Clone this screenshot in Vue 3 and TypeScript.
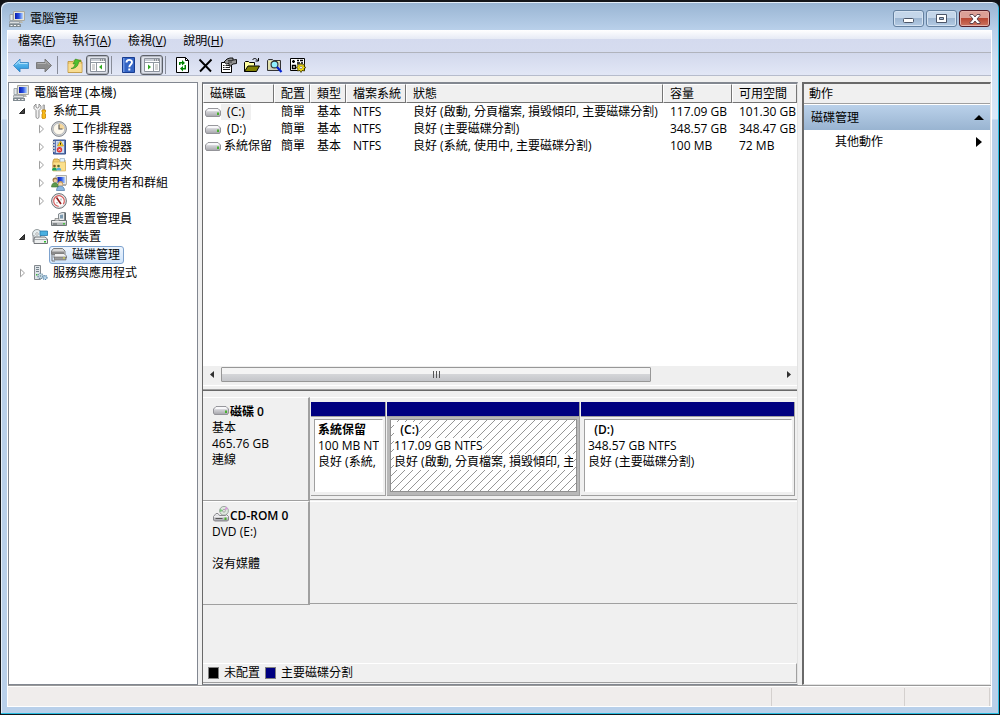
<script setup lang="ts">
interface TreeItem {
  label: string
  icon: string
  level: number
  state?: 'open' | 'closed'
  selected?: boolean
}

interface ToolItem {
  label: string
  icon: string
  pressed?: boolean
}

const menus = [
  { text: '檔案', key: 'F' },
  { text: '執行', key: 'A' },
  { text: '檢視', key: 'V' },
  { text: '說明', key: 'H' },
]

const toolGroups: ToolItem[][] = [
  [
    { label: '上一頁', icon: 'back' },
    { label: '下一頁', icon: 'forward' },
  ],
  [
    { label: '上一層', icon: 'up' },
    { label: '顯示/隱藏主控台樹狀目錄', icon: 'pane-left', pressed: true },
  ],
  [
    { label: '說明', icon: 'help' },
    { label: '顯示/隱藏執行窗格', icon: 'pane-right', pressed: true },
  ],
  [
    { label: '重新整理', icon: 'refresh' },
    { label: '刪除', icon: 'delete' },
    { label: '內容', icon: 'props' },
    { label: '開啟', icon: 'open' },
    { label: '尋找', icon: 'find' },
    { label: '設定', icon: 'settings' },
  ],
]

const tree: TreeItem[] = [
  { label: '電腦管理 (本機)', icon: 'computer', level: 0 },
  { label: '系統工具', icon: 'tools', level: 1, state: 'open' },
  { label: '工作排程器', icon: 'clock', level: 2, state: 'closed' },
  { label: '事件檢視器', icon: 'events', level: 2, state: 'closed' },
  { label: '共用資料夾', icon: 'shared', level: 2, state: 'closed' },
  { label: '本機使用者和群組', icon: 'users', level: 2, state: 'closed' },
  { label: '效能', icon: 'gauge', level: 2, state: 'closed' },
  { label: '裝置管理員', icon: 'device', level: 2 },
  { label: '存放裝置', icon: 'storage', level: 1, state: 'open' },
  { label: '磁碟管理', icon: 'disks', level: 2, selected: true },
  { label: '服務與應用程式', icon: 'services', level: 1, state: 'closed' },
]

const columns = ['磁碟區', '配置', '類型', '檔案系統', '狀態', '容量', '可用空間']

const rows = [
  [' (C:)', '簡單', '基本', 'NTFS', '良好 (啟動, 分頁檔案, 損毀傾印, 主要磁碟分割)', '117.09 GB', '101.30 GB'],
  [' (D:)', '簡單', '基本', 'NTFS', '良好 (主要磁碟分割)', '348.57 GB', '348.47 GB'],
  ['系統保留', '簡單', '基本', 'NTFS', '良好 (系統, 使用中, 主要磁碟分割)', '100 MB', '72 MB'],
]

const volumes = [
  { name: '系統保留', size: '100 MB NTFS', status: '良好 (系統, 使用中, 主要磁碟分割)', share: 75, active: false },
  { name: '  (C:)', size: '117.09 GB NTFS', status: '良好 (啟動, 分頁檔案, 損毀傾印, 主要磁碟分割)', share: 193, active: true },
  { name: '  (D:)', size: '348.57 GB NTFS', status: '良好 (主要磁碟分割)', share: 214, active: false },
]

const volumeColumns = volumes.map((v) => `minmax(0, ${v.share}fr)`).join(' ')
</script>

<template>
  <div class="window">
    <svg class="defs" aria-hidden="true">
      <defs>
        <linearGradient id="g-disk" x1="0" y1="0" x2="0" y2="1">
          <stop offset="0" stop-color="#f4f4f6" /><stop offset="1" stop-color="#a4a4aa" />
        </linearGradient>
        <linearGradient id="g-blue" x1="0" y1="0" x2="0" y2="1">
          <stop offset="0" stop-color="#7fd0f8" /><stop offset="1" stop-color="#1b8bd8" />
        </linearGradient>
        <linearGradient id="g-screen" x1="0" y1="0" x2="1" y2="0">
          <stop offset="0" stop-color="#0a1cb0" /><stop offset=".5" stop-color="#2850e0" /><stop offset="1" stop-color="#b8d8ff" />
        </linearGradient>
      </defs>

      <symbol id="computer" viewBox="0 0 16 16">
        <path d="M4.500.5h11v9h-11z" fill="#e4e4dc" stroke="#a8a8a0" />
        <path d="M6 2h8v6H6z" fill="url(#g-screen)" />
        <path d="M8 10h5l1 2H7z" fill="#b8b8b0" />
        <path d="M1 3.500h3v6H1z" fill="#e4eaec" stroke="#90989c" stroke-width=".8" />
        <path d="M.5 10.500h10v2H.5z" fill="#d8dcde" stroke="#8c9498" stroke-width=".7" />
        <path d="M0 13h12v3H0z" fill="#808a90" />
        <path d="M1.500 14h2v1h-2zm3.500 0h2v1H5zm3.500 0h2v1h-2z" fill="#f4f4f4" />
      </symbol>

      <symbol id="tools" viewBox="0 0 16 16">
        <path d="M4 1v3l1.500 1L7 4V1l2 2v2.500L7 7.500v7l-1.500 1-1.500-1v-7L2 5.500V3z" fill="#f0f0f0" stroke="#777" stroke-width=".8" />
        <path d="M11 2h1.500v5H11z" fill="#ddd" stroke="#888" stroke-width=".7" />
        <path d="M10 7h3.500v2l-1 1 1 1v4l-1 .8h-1.500l-1-.8v-4l1-1-1-1z" fill="#f8bc18" stroke="#c88400" stroke-width=".8" />
      </symbol>

      <symbol id="clock" viewBox="0 0 16 16">
        <circle cx="8" cy="8" r="7.400" fill="#d4d8dc" stroke="#787c80" stroke-width=".9" />
        <circle cx="8" cy="8" r="5.700" fill="#fdf8ec" stroke="#a4a4a4" stroke-width=".6" />
        <path d="M8 2.500a5.500 5.500 0 0 1 5.500 5.500H8z" fill="#f6d89c" />
        <path d="M8 3.500V8h3.500" fill="none" stroke="#555" stroke-width="1.100" />
      </symbol>

      <symbol id="events" viewBox="0 0 16 16">
        <path d="M2.500 1h12v14h-12z" fill="#5e78b4" stroke="#34508c" />
        <path d="M5 2h8v12H5z" fill="#cfdcf2" />
        <path d="M1 3h3M1 6h3M1 9h3M1 12h3" stroke="#ddd" stroke-width="1.500" />
        <path d="M6 4h2M6 6h2" stroke="#8c9cc0" />
        <path d="M9.500 2l3 5h-6z" fill="#ffd52e" stroke="#c29200" stroke-width=".6" />
        <path d="M9.500 3.700v2" stroke="#222" />
        <circle cx="8.500" cy="10.800" r="2.700" fill="#e03434" />
        <path d="M7.500 9.800l2 2m0-2l-2 2" stroke="#fff" stroke-width=".8" />
      </symbol>

      <symbol id="shared" viewBox="0 0 16 16">
        <path d="M2 4l1-2h4l1 1h6v10H2z" fill="#f0cb6a" stroke="#b98f2e" stroke-width=".8" />
        <path d="M9 1.500h4.500v5H9z" fill="#dff0ff" stroke="#88a4bc" stroke-width=".6" />
        <path d="M2 5h12.500v9H2z" fill="#fbe08c" stroke="#d0a848" stroke-width=".6" />
        <circle cx="3.500" cy="9" r="1.300" fill="#8a5520" /><circle cx="7.500" cy="9" r="1.300" fill="#52702c" />
        <path d="M1 13.500c0-4 5-4 5 0z" fill="#18a058" />
        <path d="M5.300 13.500c0-4 5-4 5 0z" fill="#54a8dc" />
      </symbol>

      <symbol id="users" viewBox="0 0 16 16">
        <path d="M5 .5h10.500v9H5z" fill="#e8e8e4" stroke="#b0b0a8" />
        <path d="M6.500 2H14v6H6.500z" fill="url(#g-screen)" />
        <path d="M11 9.500h4V11h-4z" fill="#aaa" />
        <circle cx="4" cy="5" r="2.500" fill="#9c7848" /><circle cx="4.400" cy="5.700" r="1.700" fill="#f0c8a0" />
        <path d="M.5 12c0-6 7-5.500 7 0z" fill="#5d9a4c" stroke="#3a7034" stroke-width=".6" />
        <circle cx="9.500" cy="8.500" r="2.500" fill="#c8a060" /><circle cx="9.500" cy="9.200" r="1.700" fill="#f8d8b0" />
        <path d="M5.500 15.500c0-6 8-6 8 0z" fill="#8cb8e0" stroke="#386898" stroke-width=".6" />
      </symbol>

      <symbol id="gauge" viewBox="0 0 16 16">
        <circle cx="8" cy="8" r="7.400" fill="#e8e8e8" stroke="#60646a" stroke-width=".9" />
        <circle cx="8" cy="8" r="5.300" fill="#fff" stroke="#d86060" stroke-width="1.200" stroke-dasharray="25 5" transform="rotate(120 8 8)" />
        <path d="M5.500 4.500L10 11" stroke="#902020" stroke-width="1.700" />
        <path d="M10 5.500v2M6 9v1.500" stroke="#999" />
      </symbol>

      <symbol id="device" viewBox="0 0 16 16">
        <path d="M7.500 8V3l3.500-1.500h2.500V9" fill="#e4e8ea" stroke="#838b90" />
        <path d="M9 4l3-.5v4H9z" fill="#7c9ab0" />
        <path d="M13.500 1l1 1v7" fill="none" stroke="#5b6468" />
        <path d="M.5 9.500h15v5H.5z" fill="#b4b8ba" stroke="#707678" />
        <path d="M1 10h14v1.500H1z" fill="#eee" />
        <path d="M2 13h4" stroke="#53585a" /><path d="M12 12h2v1.500h-2z" fill="#48c040" />
        <path d="M4 9.500V7.500h4v2" fill="#ddd" stroke="#777" stroke-width=".7" />
      </symbol>

      <symbol id="storage" viewBox="0 0 16 16">
        <circle cx="5" cy="5" r="4.500" fill="#e6eef0" stroke="#7c8488" stroke-width=".8" />
        <circle cx="5" cy="5" r="1.300" fill="#fff" stroke="#888" stroke-width=".6" />
        <path d="M8 2h7.500v4.500H8z" fill="#4ab0e0" stroke="#2678ac" stroke-width=".8" />
        <path d="M.5 6h2v7h-2z" fill="#a8acb0" />
        <path d="M3 8h10l2.500 2v4.500H2V10z" fill="#eceeee" stroke="#64686c" stroke-width=".9" />
        <path d="M2 10.500h13.500" stroke="#90969a" stroke-width=".8" /><path d="M12 12h2v1.500h-2z" fill="#30b830" />
      </symbol>

      <symbol id="disks" viewBox="0 0 16 16">
        <path d="M2.500 1.500h9L14 4v3.500H.5V4z" fill="#d8d8d8" stroke="#707070" stroke-width=".9" />
        <path d="M1 4.500h12v3H1z" fill="#8c8c8c" />
        <path d="M4 6.500h9L15.500 9v2H3V8.500z" fill="#f0f0f0" stroke="#707070" stroke-width=".8" />
        <path d="M3.500 10H15v3H3.500z" fill="#9c9c9c" stroke="#666" stroke-width=".6" />
        <path d="M1 8v6h3" fill="none" stroke="#777" /><path d="M12 10.500h2v1h-2z" fill="#e8e840" />
      </symbol>

      <symbol id="services" viewBox="0 0 16 16">
        <path d="M2.500.5h6v14h-6z" fill="#dfe4e8" stroke="#84898e" />
        <path d="M4 2.500h3M4 4.500h3M4 6.500h3" stroke="#76848e" />
        <path d="M4 9h1.500v1.500H4z" fill="#40b840" />
        <circle cx="8.500" cy="11" r="2.500" fill="#d8e8f0" stroke="#6c8ca0" stroke-width="1.300" stroke-dasharray="1.300 .8" />
        <circle cx="13" cy="12.500" r="2" fill="#bcd8ec" stroke="#5484a8" stroke-width="1.200" stroke-dasharray="1.100 .7" />
        <circle cx="8.500" cy="11" r="1" fill="#88a0b0" />
      </symbol>

      <symbol id="drive" viewBox="0 0 16 16">
        <path d="M3 4.500h10l2.500 2.500v4l-1 1.500h-13L.5 11V7z" fill="url(#g-disk)" stroke="#8c8c92" stroke-width=".9" />
        <path d="M3.500 5h9l2 2.500h-13z" fill="#f8f8fa" />
        <path d="M1.500 8h13" stroke="#c8c8ce" />
        <path d="M12 8.500h2V11h-2z" fill="#48b030" />
      </symbol>

      <symbol id="cdrom" viewBox="0 0 16 16">
        <circle cx="11" cy="4.800" r="4.400" fill="#dde8dd" stroke="#8c9490" stroke-width=".8" />
        <path d="M11 4.800L13 .8l2 2z" fill="#d898dc" /><path d="M11 4.800L7 3l-.3 3z" fill="#78c878" />
        <circle cx="11" cy="4.800" r="1.300" fill="#fff" stroke="#777" stroke-width=".6" />
        <path d="M3 7.500h2l1.500 2h6l1-1 2 2v3.500l-1 1h-13l-1-1v-3.500z" fill="url(#g-disk)" stroke="#808084" stroke-width=".9" />
        <path d="M1 10.700h14" stroke="#f4f4f4" /><path d="M2.500 12.500h7" stroke="#555" />
        <path d="M11.500 11.500h2V14h-2z" fill="#48b030" />
      </symbol>

      <symbol id="back" viewBox="0 0 16 16">
        <path d="M.5 8.500L7 2v3.500h8.500v6H7V15z" fill="url(#g-blue)" stroke="#3c88c4" stroke-width=".9" />
        <path d="M2.500 8L6.200 4.200v2.300h8.300" fill="none" stroke="#bfe8ff" stroke-width=".8" />
      </symbol>
      <symbol id="forward" viewBox="0 0 16 16">
        <path d="M15.500 8.500L9 2v3.500H.5v6H9V15z" fill="#8c8c8c" stroke="#747474" stroke-width=".9" />
        <path d="M1.500 6.500h8.300V4.200L13.500 8" fill="none" stroke="#bbb" stroke-width=".8" />
      </symbol>
      <symbol id="up" viewBox="0 0 16 16">
        <path d="M1 4.500h5l1.500-1.500H14v2h1v10.500H1z" fill="#f2cf76" stroke="#b98e34" stroke-width=".8" />
        <path d="M1.500 7h13v8h-13z" fill="#f8dc90" />
        <path d="M4 11.500c3-.5 4-3 4-5L6 7l2.500-5L14 4l-2.500 1c0 4-3.500 7-7.500 6.500z" fill="#50c030" stroke="#2c8818" stroke-width=".6" />
      </symbol>
      <symbol id="pane-left" viewBox="0 0 16 16">
        <path d="M.5 1.500h15v13H.5z" fill="#fff" stroke="#8c929c" />
        <path d="M1 2h14v2H1z" fill="#c8ccd4" /><path d="M10 3h1m1 0h1m1 0h1" stroke="#555" />
        <path d="M1 5.500h14M6.500 6v8.500" stroke="#9098a0" /><path d="M2 8h3m-3 2h3m-3 2h3" stroke="#a8a8a8" />
        <path d="M12 7.500v5L9 10z" fill="#30a820" />
      </symbol>
      <symbol id="pane-right" viewBox="0 0 16 16">
        <path d="M.5 1.500h15v13H.5z" fill="#fff" stroke="#8c929c" />
        <path d="M1 2h14v2H1z" fill="#c8ccd4" /><path d="M10 3h1m1 0h1m1 0h1" stroke="#555" />
        <path d="M1 5.500h14M9.500 6v8.500" stroke="#9098a0" /><path d="M11 8h3m-3 2h3m-3 2h3" stroke="#a8a8a8" />
        <path d="M4 7.500v5L7 10z" fill="#30a820" />
      </symbol>
      <symbol id="help" viewBox="0 0 16 16">
        <path d="M1.500.5h12v15h-12z" fill="#3464c4" stroke="#183c90" />
        <path d="M2 1h1.500v14H2z" fill="#6d96e4" />
        <path d="M5.500 5.500c0-3.500 5.500-3.300 5.500-.3 0 2.300-2.700 2.300-2.700 5" fill="none" stroke="#fff" stroke-width="1.900" />
        <path d="M7.300 11.500h2v2h-2z" fill="#fff" />
      </symbol>
      <symbol id="refresh" viewBox="0 0 16 16">
        <path d="M1.500.5h9l3 3v12h-12z" fill="#fff" stroke="#000" /><path d="M10.500.5v3h3" fill="none" stroke="#000" />
        <path d="M4 8V5h3V3l3 3-3 2.500V6.500H5.500V8z" fill="#008200" />
        <path d="M11 8v4.500H8v2l-3-3L8 9v2h1.500V8z" fill="#008200" />
      </symbol>
      <symbol id="delete" viewBox="0 0 16 16">
        <path d="M1.500 2.500L13 14.500M13.500 2.500L2 14.500" fill="none" stroke="#000" stroke-width="1.900" />
      </symbol>
      <symbol id="props" viewBox="0 0 16 16">
        <path d="M.5 5.500h10v10H.5z" fill="#fff" stroke="#000" />
        <path d="M2 8.500h1.500m1 0H9M2 10.500h1.500m1 0H9M2 12.500h7" stroke="#222" />
        <path d="M3 5l3-3 3-1h3v2l3.500-.5v4L12 7l-2.500 2H8V6.500L5.500 7z" fill="#909090" stroke="#000" stroke-width=".9" />
        <path d="M7 3.500h5M7 5h4" stroke="#222" stroke-width=".8" />
      </symbol>
      <symbol id="open" viewBox="0 0 16 16">
        <path d="M.5 14.500v-9l1-1h3l1 1h5v3" fill="#ffffa0" stroke="#000" />
        <path d="M.5 14.500L4 9h11.500l-3 5.500z" fill="#808000" stroke="#000" />
        <path d="M8.500 3c1-2 4-2 5 .5M14.500 1v3h-3" fill="none" stroke="#000" />
      </symbol>
      <symbol id="find" viewBox="0 0 16 16">
        <path d="M.5 13.500v-10l1-1h4l1 1h7v10z" fill="#d0d0c0" stroke="#333" />
        <path d="M2 4v8M2 4.500h10" stroke="#f4f4a0" />
        <circle cx="7.500" cy="7.500" r="3.400" fill="#90f0ff" stroke="#333" stroke-width="1.100" />
        <path d="M10 10l4.500 5" stroke="#0020d0" stroke-width="2.200" />
      </symbol>
      <symbol id="settings" viewBox="0 0 16 16">
        <path d="M.5 1.500h14v12H.5z" fill="#fff" stroke="#000" />
        <path d="M3.500 3v3m-1.500-1.500h3M2.500 8.500h3v3h-3zM7 3.500h2m1 0h3M7 6h3m1 0h2" fill="none" stroke="#000" stroke-width="1.400" />
        <path d="M11 6l1 2 2.500-1L14 9.500l2 1-2 1 .5 2.500-2.500-.5-1 2-1-2-2.500.5.5-2.500-2-1 2-1L7.500 7l2.500 1z" fill="#f8e010" stroke="#333000" stroke-width=".7" />
        <circle cx="11" cy="10.500" r="1.300" fill="#fff" stroke="#444" stroke-width=".5" />
      </symbol>
    </svg>

    <header class="titlebar">
      <svg class="icon"><use href="#computer" /></svg>
      <h1>電腦管理</h1>
      <div class="caption">
        <button type="button" aria-label="最小化" class="min">
          <svg width="12" height="6"><rect x=".5" y=".5" width="10" height="4" rx="1" fill="#fff" stroke="#4b5568" /></svg>
        </button>
        <button type="button" aria-label="最大化" class="max">
          <svg width="12" height="10"><path d="M.5.500h10v8H.5z" fill="#fff" stroke="#4b5568" /><path d="M3.500 3.500h4v2h-4z" fill="#a0b8d4" stroke="#4b5568" /></svg>
        </button>
        <button type="button" aria-label="關閉" class="close">
          <svg width="12" height="10"><path d="M1 .500h3L6 3 8 .500h3v1L8 5l3 3.500v1H8L6 7 4 9.500H1v-1L4 5 1 1.500z" fill="#fff" stroke="#533b45" stroke-width=".9" /></svg>
        </button>
      </div>
    </header>

    <div class="client">
      <nav class="menubar">
        <button v-for="m in menus" :key="m.key" type="button">{{ m.text }}(<u>{{ m.key }}</u>)</button>
      </nav>

      <div class="toolbar">
        <div v-for="(group, i) in toolGroups" :key="i" class="tool-group">
          <button
            v-for="t in group"
            :key="t.icon"
            type="button"
            :aria-label="t.label"
            :class="{ pressed: t.pressed }"
          >
            <svg class="icon"><use :href="'#' + t.icon" /></svg>
          </button>
        </div>
      </div>

      <main class="panes">
        <aside class="pane tree">
          <ul>
            <li v-for="item in tree" :key="item.label" :class="'level' + item.level">
              <span v-if="item.level" class="expander">
                <svg v-if="item.state === 'open'" width="8" height="8"><path d="M6.500 1.500v5h-5z" fill="#404040" stroke="#262626" /></svg>
                <svg v-else-if="item.state === 'closed'" width="8" height="10"><path d="M2.500 1.200L6.500 5l-4 3.800z" fill="#fff" stroke="#a0a0a0" /></svg>
              </span>
              <span class="node" :class="{ selected: item.selected }">
                <svg class="icon"><use :href="'#' + item.icon" /></svg>
                <span>{{ item.label }}</span>
              </span>
            </li>
          </ul>
        </aside>

        <section class="pane center">
          <div class="list">
            <div class="table-area">
              <table>
                <colgroup>
                  <col class="c-name" /><col class="c-short" /><col class="c-short" /><col class="c-fs" />
                  <col class="c-status" /><col class="c-size" /><col class="c-free" />
                </colgroup>
                <thead>
                  <tr><th v-for="c in columns" :key="c" scope="col">{{ c }}</th></tr>
                </thead>
                <tbody>
                  <tr v-for="(r, i) in rows" :key="r[0]">
                    <td v-for="(cell, j) in r" :key="j">
                      <span v-if="j === 0" class="vol-name">
                        <svg class="icon"><use href="#drive" /></svg>
                        <span :class="{ focused: i === 0 }">{{ cell }}</span>
                      </span>
                      <template v-else>{{ cell }}</template>
                    </td>
                  </tr>
                </tbody>
              </table>
            </div>
            <div class="scrollbar">
              <button type="button" aria-label="向左捲動"><svg width="4" height="7"><path d="M4 0v7L0 3.500z" fill="#303030" /></svg></button>
              <div class="track">
                <div class="thumb"><i></i><i></i><i></i></div>
              </div>
              <button type="button" aria-label="向右捲動"><svg width="4" height="7"><path d="M0 0v7l4-3.500z" fill="#303030" /></svg></button>
            </div>
          </div>

          <div class="splitter"></div>

          <div class="disks">
            <div class="disk">
              <div class="disk-label">
                <h2><svg class="icon"><use href="#drive" /></svg>磁碟 0</h2>
                <p>基本</p>
                <p>465.76 GB</p>
                <p>連線</p>
              </div>
              <div class="disk-body">
                <div class="volumes" :style="{ gridTemplateColumns: volumeColumns }">
                  <article v-for="v in volumes" :key="v.name" class="volume" :class="{ active: v.active }">
                    <div class="bar"></div>
                    <div class="volume-frame">
                      <div class="volume-box">
                        <svg v-if="v.active" class="hatch" aria-hidden="true">
                          <defs>
                            <pattern id="hatch" width="8" height="8" patternUnits="userSpaceOnUse">
                              <path d="M-1 9L9-1M-1 1l2-2M7 9l2-2" stroke="#8a8a8a" stroke-width=".9" />
                            </pattern>
                          </defs>
                          <rect width="100%" height="100%" fill="url(#hatch)" />
                        </svg>
                        <p><b>{{ v.name }}</b></p>
                        <p><span>{{ v.size }}</span></p>
                        <p><span>{{ v.status }}</span></p>
                      </div>
                    </div>
                  </article>
                </div>
              </div>
            </div>
            <div class="disk">
              <div class="disk-label">
                <h2><svg class="icon"><use href="#cdrom" /></svg>CD-ROM 0</h2>
                <p>DVD (E:)</p>
                <p></p>
                <p>沒有媒體</p>
              </div>
              <div class="disk-body"></div>
            </div>
          </div>

          <footer class="legend">
            <span><i class="swatch free"></i>未配置</span>
            <span><i class="swatch primary"></i>主要磁碟分割</span>
          </footer>
        </section>

        <aside class="pane actions">
          <h2 class="actions-title">動作</h2>
          <button type="button" class="actions-group">
            磁碟管理
            <svg width="10" height="5"><path d="M5 0l5 5H0z" /></svg>
          </button>
          <button type="button" class="actions-item">
            其他動作
            <svg width="6" height="10"><path d="M0 0l6 5-6 5z" /></svg>
          </button>
        </aside>
      </main>

      <footer class="statusbar"><span></span><span></span><span></span></footer>
    </div>
  </div>
</template>

<style>
html,
body {
  background: #101216;
}
</style>

<style scoped>
* {
  box-sizing: border-box;
}
.window {
  display: flex;
  flex-direction: column;
  height: 100vh;
  border: solid #14161a;
  border-width: 2px 1px 1px;
  border-top-left-radius: 8px;
  border-top-right-radius: 8px;
  background: linear-gradient(#98b4d2, #b9d0ea 28px, #cfe0f3 60px, #dae9f8 117px, #b9d0ea 118px);
  box-shadow: inset -1px -1px #28bce0, inset 1px 1px #e4eef8;
  padding: 0 7px 7px 6px;
  font: 12px/16px "Open Sans", "Noto Sans CJK TC", sans-serif;
  color: #000;
  overflow: hidden;
}
.defs {
  position: absolute;
  width: 0;
  height: 0;
}
.icon {
  width: 16px;
  height: 16px;
  flex: none;
  display: block;
}
button {
  font: inherit;
  color: inherit;
  border: 0;
  background: none;
  padding: 0;
}
h1,
h2,
p,
ul {
  margin: 0;
  padding: 0;
  font-size: inherit;
  font-weight: normal;
}
.titlebar {
  display: flex;
  align-items: center;
  gap: 5px;
  height: 28px;
  flex: none;
  padding: 5px 2px 0 2px;
}
.caption {
  display: flex;
  gap: 2px;
  margin-left: auto;
}
.caption button {
  display: flex;
  align-items: center;
  justify-content: center;
  width: 31px;
  height: 17px;
  border: 1px solid #64809f;
  border-radius: 3px;
  background: linear-gradient(#c4d6ea 50%, #9db6d2 50%, #b4cbe4);
  box-shadow: inset 0 0 0 1px #d5e3f2;
}
.caption .min {
  align-items: flex-end;
  padding-bottom: 2px;
}
.caption .close {
  border-color: #531d28;
  background: linear-gradient(#dca096 50%, #b84834 50%, #cc7460);
  box-shadow: inset 0 0 0 1px #e4b0a8;
}
.client {
  display: flex;
  flex-direction: column;
  flex: 1;
  min-height: 0;
  background: #f0f0f0;
  border: solid #fff;
  border-width: 0 1px 1px 1px;
}
.menubar {
  display: flex;
  align-items: center;
  gap: 17px;
  height: 23px;
  flex: none;
  padding-left: 10px;
  background: linear-gradient(#fff, #e6eaf5 9px, #d4daee 9px, #d6dcef);
  border-bottom: 1px solid #b0b3bc;
}
.toolbar {
  display: flex;
  height: 23px;
  flex: none;
  padding: 1px 0 0 1px;
  background: linear-gradient(#d2d8ec, #e2e7f6);
  border-bottom: 1px solid #b6bccc;
}
.tool-group {
  display: flex;
  align-items: center;
}
.tool-group + .tool-group::before {
  content: "";
  width: 1px;
  height: 18px;
  margin: 0 5px 0 2px;
  background: #888c98;
}
.tool-group button {
  display: flex;
  align-items: center;
  justify-content: center;
  width: 23px;
  height: 20px;
}
.tool-group .pressed {
  border: 1px solid #5c6068;
  border-radius: 3px;
  background: #dfe2ea;
  box-shadow: inset 0 0 0 1px #b4b8c2;
}
.panes {
  display: flex;
  gap: 4px;
  flex: 1;
  min-height: 0;
  padding-top: 6px;
}
.pane {
  border: 1px solid #828790;
  border-color: #828790 #e3e3e3 #e3e3e3 #828790;
}
.tree {
  width: 190px;
  flex: none;
  background: #fff;
  border-color: #828790;
  overflow: hidden;
}
.tree ul {
  list-style: none;
  padding-top: 1px;
}
.tree li {
  display: flex;
  align-items: center;
  height: 18px;
  white-space: nowrap;
}
.level0 {
  padding-left: 2px;
}
.level1 {
  padding-left: 9px;
}
.level2 {
  padding-left: 28px;
}
.expander {
  display: flex;
  align-items: center;
  width: 12px;
  flex: none;
}
.node {
  display: flex;
  align-items: center;
  gap: 5px;
  height: 18px;
  padding: 0 3px 0 1px;
  border: 1px solid transparent;
}
.node.selected {
  border-color: #7da2ce;
  border-radius: 3px;
  background: linear-gradient(#eef5fd, #cfe3fa);
}
.center {
  display: flex;
  flex-direction: column;
  flex: 1;
  min-width: 0;
  border-color: #828790 #e3e3e3 #828790 #696969;
  border-top-width: 2px;
}
.list {
  display: flex;
  flex-direction: column;
  flex: 302 1 0;
  min-height: 0;
  background: #fff;
}
.table-area {
  flex: 1;
  min-height: 0;
  overflow: hidden;
}
table {
  width: 100%;
  table-layout: fixed;
  border-collapse: separate;
  border-spacing: 0;
}
.c-name {
  width: 71px;
}
.c-short {
  width: 36px;
}
.c-fs {
  width: 60px;
}
.c-size {
  width: 69px;
}
.c-free {
  width: 65px;
}
th {
  height: 19px;
  padding: 0 0 0 6px;
  text-align: left;
  font-weight: normal;
  white-space: nowrap;
  background: #f0f0f0;
  border: 1px solid;
  border-color: #fff #757575 #757575 #fff;
}
td {
  height: 17px;
  padding: 0 0 0 7px;
  white-space: pre;
}
td:first-child {
  padding-left: 2px;
}
.vol-name {
  display: flex;
  align-items: center;
}
.vol-name > span {
  padding: 0 3px;
}
.vol-name .focused {
  padding-right: 6px;
  background: #f0f0f0;
}
.scrollbar {
  display: flex;
  height: 17px;
  flex: none;
  background: #efefef;
}
.scrollbar button {
  display: flex;
  align-items: center;
  justify-content: center;
  width: 17px;
}
.track {
  flex: 1;
  padding: 1px 0 1px 1px;
}
.thumb {
  display: flex;
  align-items: center;
  justify-content: center;
  gap: 2px;
  width: 77%;
  height: 15px;
  border: 1px solid #979797;
  border-radius: 1px;
  background: linear-gradient(#f4f4f4 50%, #d4d5d8 50%, #c4c6ca);
}
.thumb i {
  width: 1px;
  height: 7px;
  background: #555;
}
.splitter {
  height: 8px;
  flex: none;
  background: #f0f0f0;
  border-bottom: 1px solid #696969;
  box-shadow: inset 0 -1px #a0a0a0, inset 0 -4px #f0f0f0, inset 0 -5px #fff;
}
.disks {
  flex: 269 1 0;
  min-height: 0;
  padding-top: 6px;
  background: #f0f0f0;
}
.disk {
  display: flex;
  height: 104px;
}
.disk-label {
  width: 107px;
  flex: none;
  padding: 6px 0 0 9px;
  border: solid;
  border-width: 1px 2px 1px 0;
  border-color: #fff #a0a0a0 #a0a0a0 #fff;
  white-space: nowrap;
}
.disk-label h2 {
  display: flex;
  gap: 1px;
  height: 16px;
  font-weight: 600;
  padding-left: 1px;
}
.disk-label h2 .icon {
  margin-top: -2px;
}
.disk-label p {
  height: 16px;
}
.disk-body {
  flex: 1;
  min-width: 0;
  margin-bottom: 1px;
  padding: 4px 2px 3px 1px;
  border: solid;
  border-width: 1px 0;
  border-color: #fff #a0a0a0 #a0a0a0;
}
.volumes {
  display: grid;
  gap: 1px;
  height: 100%;
}
.volume {
  display: flex;
  flex-direction: column;
  background: #f0f0f0;
  border: solid #a0a0a0;
  border-width: 0 1px 1px 0;
}
.bar {
  height: 15px;
  flex: none;
  background: #000080;
  border-bottom: 1px solid #a0a0a0;
}
.volume-frame {
  display: flex;
  flex: 1;
  min-height: 0;
  padding: 2px 2px 3px 3px;
}
.active .volume-frame {
  background: #b8b8b8;
}
.volume-box {
  position: relative;
  flex: 1;
  min-width: 0;
  padding: 2px 3px;
  background: #fff;
  border: 1px solid;
  border-color: #a0a0a0 #fff #fff #a0a0a0;
  overflow: hidden;
}
.active .volume-box {
  border-color: #909090;
}
.hatch {
  position: absolute;
  inset: 0;
  width: 100%;
  height: 100%;
}
.volume-box p {
  position: relative;
  height: 16px;
  white-space: pre;
  overflow: hidden;
}
.volume-box b,
.volume-box span {
  display: inline-block;
  background: #fff;
}
.volume-box b {
  font-weight: 600;
}
.legend {
  display: flex;
  align-items: center;
  gap: 5px;
  height: 20px;
  flex: none;
  padding-left: 5px;
  margin-bottom: 1px;
  border: solid;
  border-width: 1px 1px 1px 0;
  border-color: #fff #a0a0a0 #a0a0a0;
}
.legend span {
  display: flex;
  align-items: center;
  gap: 5px;
}
.swatch {
  width: 11px;
  height: 12px;
  border: 1px solid #808080;
}
.free {
  background: #000;
}
.primary {
  background: #000080;
}
.actions {
  display: flex;
  flex-direction: column;
  width: 189px;
  flex: none;
  background: #fff;
  border-width: 2px 1px 1px 2px;
  border-color: #696969 #e3e3e3 #e3e3e3 #696969;
}
.actions-title {
  height: 20px;
  padding: 2px 0 0 5px;
  background: #f0f0f0;
  border-bottom: 1px solid #a0a0a0;
}
.actions-group,
.actions-item {
  display: flex;
  align-items: center;
  justify-content: space-between;
}
.actions-group {
  height: 25px;
  margin-top: 1px;
  padding: 0 6px 0 7px;
  background: linear-gradient(#bad1ea, #99b4d1);
}
.actions-item {
  height: 24px;
  padding: 0 8px 0 31px;
}
.statusbar {
  display: flex;
  height: 21px;
  flex: none;
  border-top: 1px solid #999;
  box-shadow: inset 0 1px #fff;
  background: #f0edec;
}
.statusbar span {
  border-right: 1px solid #d4d0ce;
  margin-top: 2px;
}
.statusbar span:first-child {
  flex: 1;
}
.statusbar span:nth-child(2) {
  width: 133px;
}
.statusbar span:last-child {
  width: 85px;
  margin-right: 1px;
}
</style>
